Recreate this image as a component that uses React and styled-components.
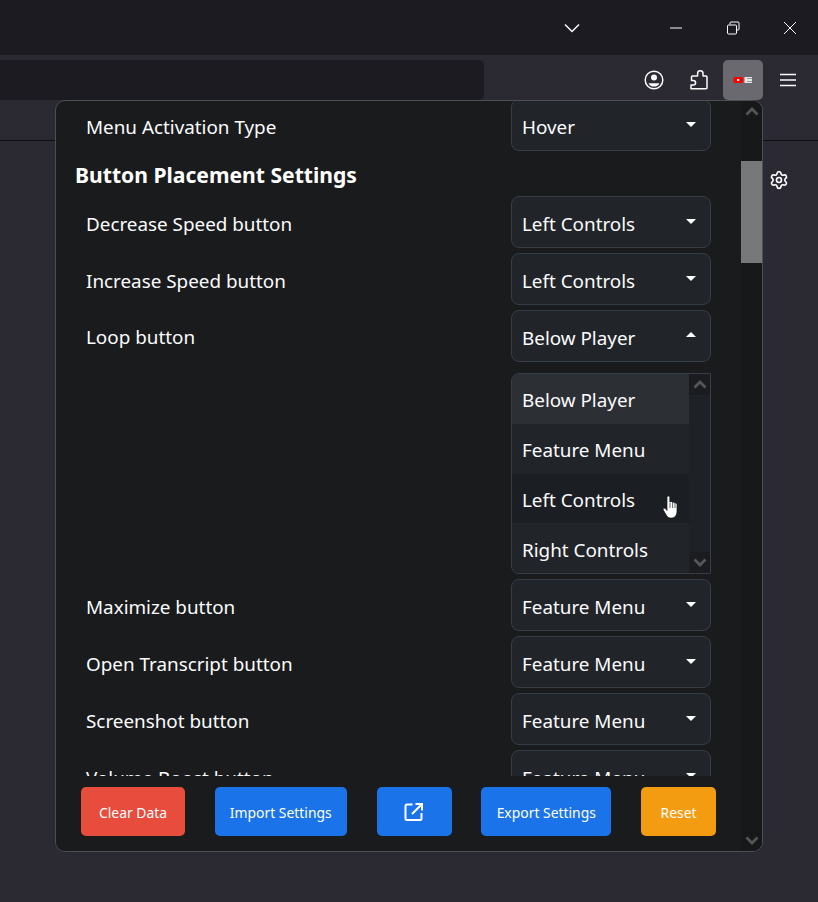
import styled, { createGlobalStyle } from "styled-components"
import { Settings } from "lucide-react"

const GlobalStyle = createGlobalStyle`
  html, body {
    margin: 0;
    height: 100%;
    overflow: hidden;
    background: #2b2a33;
  }
  * {
    box-sizing: border-box;
  }
`

const Window = styled.div`
  position: relative;
  width: 818px;
  height: 902px;
  overflow: hidden;
  background: #2b2a33;
  font-family: "Noto Sans", "Open Sans", sans-serif;
  color: #fbfbfe;
`

const TitleBar = styled.div`
  height: 55px;
  background: #1c1b22;
  display: flex;
  align-items: center;
`

const TabsChevron = styled.div`
  margin-left: 564px;
  width: 18px;
  display: flex;
`

const WindowControls = styled.div`
  margin-left: 87px;
  display: flex;
  align-items: center;
  gap: 43px;
`

const Toolbar = styled.div`
  height: 45px;
  padding-top: 5px;
  display: flex;
  background: #2b2a33;
`

const UrlField = styled.div`
  width: 484px;
  height: 40px;
  background: #1c1b22;
  border-radius: 0 5px 5px 0;
`

const ToolbarIcons = styled.div`
  margin-left: 149px;
  display: flex;
  align-items: center;
`

const ToolIcon = styled.div`
  width: ${(p) => p.$w}px;
  height: 40px;
  display: flex;
  align-items: center;
  justify-content: center;
  border-radius: 5px;
  background: ${(p) => (p.$active ? "#6a6970" : "transparent")};
`

const BookmarkStrip = styled.div`
  height: 41px;
  background: #2b2a33;
  border-bottom: 1px solid #0f0f12;
`

const PageBody = styled.div`
  display: flex;
  justify-content: flex-end;
  padding: 29px 29px 0 0;
`

const Popup = styled.div`
  position: absolute;
  left: 55px;
  top: 100px;
  width: 708px;
  height: 752px;
  display: flex;
  background: #1a1b1d;
  border: 1px solid #4d4d55;
  border-radius: 10px;
  overflow: hidden;
`

const PopupMain = styled.div`
  width: 685px;
  display: flex;
  flex-direction: column;
`

const ScrollArea = styled.div`
  height: 675px;
  overflow: hidden;
`

const ScrollContent = styled.div`
  margin-top: -2px;
  display: flex;
  flex-direction: column;
  gap: 5px;
`

const Row = styled.div`
  display: flex;
  justify-content: space-between;
  align-items: flex-start;
  padding: 0 30px;
`

const Label = styled.div`
  font-size: 18.85px;
  line-height: 52px;
  height: 52px;
  padding-top: ${(p) => (p.$open ? 1 : 2)}px;
`

const Heading = styled.div`
  font-size: 21.1px;
  font-weight: 700;
  height: 35px;
  line-height: 38px;
  padding-left: 19px;
  color: #ffffff;
`

const SelectColumn = styled.div`
  width: 200px;
  display: flex;
  flex-direction: column;
`

const SelectBox = styled.div`
  height: 52px;
  padding: 4px 14px 0 10px;
  display: flex;
  align-items: center;
  justify-content: space-between;
  font-size: 18.85px;
  background: #212529;
  border: 1px solid #373d47;
  border-radius: 8px;
`

const Caret = styled.span`
  width: 0;
  height: 0;
  margin-bottom: ${(p) => (p.$up ? 8 : 6)}px;
  border-left: 5px solid transparent;
  border-right: 5px solid transparent;
  border-top: ${(p) => (p.$up ? "0" : "5px solid #fff")};
  border-bottom: ${(p) => (p.$up ? "5px solid #fff" : "0")};
`

const OptionList = styled.div`
  margin-top: 11px;
  height: 201px;
  display: flex;
  background: #212529;
  border: 1px solid #373d47;
  border-radius: 8px 0 0 8px;
  overflow: hidden;
`

const Options = styled.div`
  width: 177px;
  display: flex;
  flex-direction: column;
`

const Option = styled.div`
  height: 50px;
  padding: 3px 0 0 10px;
  display: flex;
  align-items: center;
  font-size: 18.85px;
  background: ${(p) => p.$bg};
`

const HandCursor = styled.svg`
  position: absolute;
  left: 662px;
  top: 495px;
`

const ListScrollbar = styled.div`
  flex: 1;
  display: flex;
  flex-direction: column;
  justify-content: space-between;
  align-items: center;
  background: #1e2125;
`

const ArrowCell = styled.div`
  width: 100%;
  height: 21px;
  display: flex;
  align-items: center;
  justify-content: center;
  background: #1a1c1f;
`

const PopupScrollbar = styled.div`
  position: relative;
  flex: 1;
  display: flex;
  flex-direction: column;
  justify-content: space-between;
  align-items: center;
  padding: 6px 0;
  background: #17181a;
`

const Thumb = styled.div`
  position: absolute;
  top: 60px;
  left: 0;
  width: 100%;
  height: 102px;
  background: #77787a;
`

const Footer = styled.div`
  height: 75px;
  padding: 11px 0 0 25px;
  display: flex;
  align-items: flex-start;
  gap: 29.75px;
  background: #1a1b1d;
`

const ActionButton = styled.button`
  width: ${(p) => p.$w}px;
  height: 49px;
  display: flex;
  align-items: center;
  justify-content: center;
  flex: none;
  padding: 1px 0 0;
  border: none;
  border-radius: 5px;
  font-family: inherit;
  font-size: 13.9px;
  color: #fff;
  background: ${(p) => p.$bg};
`

const Chevron = ({ up, color = "#55565a" }) => (
  <svg width="14" height="9" viewBox="0 0 14 9">
    <path d={up ? "M1.500 7.500 7 2l5.500 5.500" : "M1.500 1.500 7 7l5.500-5.500"} fill="none" stroke={color} strokeWidth="2.800" />
  </svg>
)

const Select = ({ value, open }) => (
  <SelectBox>
    {value}
    <Caret $up={open} />
  </SelectBox>
)

const SettingRow = ({ label, value }) => (
  <Row>
    <Label>{label}</Label>
    <SelectColumn>
      <Select value={value} />
    </SelectColumn>
  </Row>
)

const optionRows = [
  ["Below Player", "#2c2f34"],
  ["Feature Menu", "#212529"],
  ["Left Controls", "#1b1e22"],
  ["Right Controls", "#212529"],
]

export default function App() {
  return (
    <Window>
      <GlobalStyle />
      <TitleBar>
        <TabsChevron>
          <svg width="16" height="10" viewBox="0 0 16 10">
            <path d="M1 1.500 8 8.500l7-7" fill="none" stroke="#fbfbfe" strokeWidth="1.500" />
          </svg>
        </TabsChevron>
        <WindowControls>
          <svg width="14" height="14" viewBox="0 0 14 14">
            <path d="M1 7h12" stroke="#fbfbfe" strokeWidth="1" />
          </svg>
          <svg width="14" height="14" viewBox="0 0 14 14">
            <path d="M4 3.500V2a1 1 0 0 1 1-1h7a1 1 0 0 1 1 1v6a1 1 0 0 1-1 1h-1.500" fill="none" stroke="#fbfbfe" />
            <rect x="1.500" y="4" width="9" height="9" rx="1" fill="none" stroke="#fbfbfe" />
          </svg>
          <svg width="14" height="14" viewBox="0 0 14 14">
            <path d="M1 1l12 12M13 1 1 13" stroke="#fbfbfe" strokeWidth="1" />
          </svg>
        </WindowControls>
      </TitleBar>

      <Toolbar>
        <UrlField />
        <ToolbarIcons>
          <ToolIcon $w={42}>
            <svg width="20" height="20" viewBox="0 0 20 20">
              <circle cx="10" cy="10" r="8.800" fill="none" stroke="#fbfbfe" strokeWidth="1.500" />
              <circle cx="10" cy="7.500" r="3" fill="#fbfbfe" />
              <path d="M4.500 13.200h11c-1 2.300-3 3.400-5.500 3.400s-4.500-1.100-5.500-3.400z" fill="#fbfbfe" />
            </svg>
          </ToolIcon>
          <ToolIcon $w={48}>
            <svg width="18" height="20" viewBox="0 0 18 20">
              <path
                d="M1 18.800h15a1 1 0 0 0 1-1V7a1 1 0 0 0-1-1h-3V3.500a2.700 2.700 0 0 0-5.400 0V6H2.500a1 1 0 0 0-1 1v3.500h1.800a2.300 2.300 0 0 1 0 4.600H1z"
                fill="none"
                stroke="#fbfbfe"
                strokeWidth="1.500"
                strokeLinejoin="round"
              />
            </svg>
          </ToolIcon>
          <ToolIcon $w={40} $active>
            <svg width="20" height="8" viewBox="0 0 20 8">
              <rect x="0.500" y="1" width="9.500" height="6" rx="1" fill="#ff0000" />
              <rect x="4.200" y="3" width="2" height="2" fill="#fff" />
              <rect x="11.500" y="1" width="7.500" height="6" fill="#e4e4e6" />
              <path d="M14 2.500h5M14 5.500h5" stroke="#85848a" strokeWidth="0.800" />
            </svg>
          </ToolIcon>
          <ToolIcon $w={50}>
            <svg width="16" height="14" viewBox="0 0 16 14">
              <path d="M0 1.500h16M0 7h16M0 12.500h16" stroke="#fbfbfe" strokeWidth="1.500" />
            </svg>
          </ToolIcon>
        </ToolbarIcons>
      </Toolbar>

      <BookmarkStrip />

      <PageBody>
        <Settings size={20} strokeWidth={2} color="#fbfbfe" />
      </PageBody>

      <Popup>
        <PopupMain>
          <ScrollArea>
            <ScrollContent>
              <SettingRow label="Menu Activation Type" value="Hover" />
              <Heading>Button Placement Settings</Heading>
              <SettingRow label="Decrease Speed button" value="Left Controls" />
              <SettingRow label="Increase Speed button" value="Left Controls" />
              <Row>
                <Label $open>Loop button</Label>
                <SelectColumn>
                  <Select value="Below Player" open />
                  <OptionList>
                    <Options>
                      {optionRows.map(([text, bg]) => (
                        <Option key={text} $bg={bg}>
                          {text}
                        </Option>
                      ))}
                    </Options>
                    <ListScrollbar>
                      <ArrowCell>
                        <Chevron up />
                      </ArrowCell>
                      <ArrowCell>
                        <Chevron />
                      </ArrowCell>
                    </ListScrollbar>
                  </OptionList>
                </SelectColumn>
              </Row>
              <SettingRow label="Maximize button" value="Feature Menu" />
              <SettingRow label="Open Transcript button" value="Feature Menu" />
              <SettingRow label="Screenshot button" value="Feature Menu" />
              <SettingRow label="Volume Boost button" value="Feature Menu" />
            </ScrollContent>
          </ScrollArea>
          <Footer>
            <ActionButton $w={104} $bg="#e74c3c">
              Clear Data
            </ActionButton>
            <ActionButton $w={132} $bg="#1a73e8">
              Import Settings
            </ActionButton>
            <ActionButton $w={75} $bg="#1a73e8">
              <svg width="20" height="20" viewBox="0 0 20 20">
                <path
                  d="M8.500 2.500H3a1.500 1.500 0 0 0-1.500 1.500v12.500A1.500 1.500 0 0 0 3 18h13a1.500 1.500 0 0 0 1.500-1.500V11M11.500 2H18v6.500M17.500 2.500 8 12"
                  fill="none"
                  stroke="#fff"
                  strokeWidth="2"
                />
              </svg>
            </ActionButton>
            <ActionButton $w={130} $bg="#1a73e8">
              Export Settings
            </ActionButton>
            <ActionButton $w={75} $bg="#f39c12">
              Reset
            </ActionButton>
          </Footer>
        </PopupMain>
        <PopupScrollbar>
          <Chevron up />
          <Thumb />
          <Chevron />
        </PopupScrollbar>
      </Popup>

      <HandCursor width="18" height="24" viewBox="0 0 18 24">
        <path
          d="M5 2.500a1.400 1.400 0 0 1 2.800 0V7h.6a1.300 1.300 0 0 1 2.200.6 1.300 1.300 0 0 1 2.200.8 1.300 1.300 0 0 1 2.200 1V16c0 3.500-1.800 7-5 7H8.500c-2 0-3-1-4-2.500L1.300 15c-.7-1.200.9-2.400 2-1.400L5 15.500z"
          fill="#fff"
          stroke="#15171a"
          strokeWidth="0.700"
        />
        <path d="M8 8v5M10.600 8v5M13 9v4" stroke="#3a3c40" strokeWidth="0.800" />
      </HandCursor>
    </Window>
  )
}
